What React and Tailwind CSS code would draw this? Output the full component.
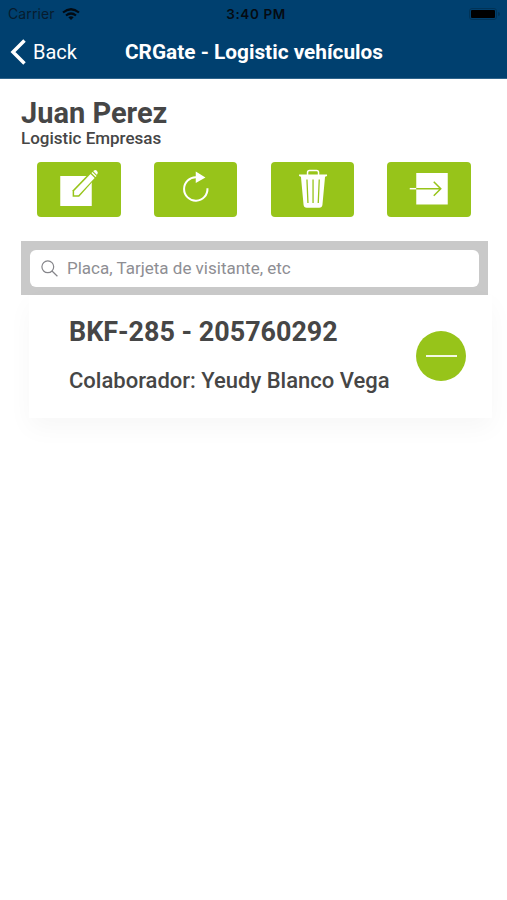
import React from 'react';

const EditIcon = () => (
  <svg className="w-full h-full" viewBox="0 0 83 55" fill="none">
    <path d="M23 14h31.500v30H23z" fill="#fff" />
    <path d="M35.400 34.700v-6.400L52.600 10.500l6 5.600L41.900 34.700z" fill="#97c41a" />
    <path d="M36.900 33.200v-4.300L53.300 12l4.100 3.900L41.200 33.200z" fill="#fff" />
    <path d="M54.200 11l1-1 4.100 3.900-1 1z" fill="#fff" />
    <path d="M56 9.200l.7-.7q1.400-1 2.900.3t.6 3.200l-.7.700z" fill="#fff" />
  </svg>
);

const RefreshIcon = () => (
  <svg className="w-full h-full" viewBox="0 0 83 55" fill="none">
    <path d="M42 15.300A11.700 11.700 0 1 0 53.200 26.200" stroke="#fff" strokeWidth="2" />
    <path d="M41.500 9.500l9.700 5.900-9.700 5.700z" fill="#fff" />
  </svg>
);

const TrashIcon = () => (
  <svg className="w-full h-full" viewBox="0 0 83 55" fill="none">
    <path d="M36.300 13v-2.500q0-2 2-2h7q2 0 2 2V13" stroke="#fff" strokeWidth="1.500" />
    <path d="M27.800 12.500h28V14l-2 .7-2.600 28q-.3 3-3.200 3H35.500q-2.900 0-3.200-3l-2.600-28-1.900-.7z" fill="#fff" />
    <path d="M35.700 17.500l1 23.500M41.800 17.500V41M48 17.500l-1 23.500" stroke="#97c41a" strokeWidth="1.300" />
  </svg>
);

const ExitIcon = () => (
  <svg className="w-full h-full" viewBox="0 0 83 55" fill="none">
    <path d="M29 11h31.500v31.500H29z" fill="#fff" />
    <path d="M22.500 26.700H29" stroke="#fff" strokeWidth="1.500" />
    <path d="M29 26.700h24M46.500 19.700l7 7-7 7" stroke="#97c41a" strokeWidth="1.500" />
  </svg>
);

const actions = [
  { label: 'Edit', Icon: EditIcon },
  { label: 'Refresh', Icon: RefreshIcon },
  { label: 'Delete', Icon: TrashIcon },
  { label: 'Exit', Icon: ExitIcon },
];

const Header = () => (
  <header className="h-[79px] bg-[#00406f] border-b border-[#2f648b]">
    <div className="grid grid-cols-3 items-center h-[27px] pl-2 pr-[7px] font-['Inter',sans-serif]">
      <div className="flex items-center gap-[7px]">
        <span className="text-[14px] leading-none tracking-[0.1px] text-[#071c2e]">Carrier</span>
        <svg className="w-[18px] h-3" viewBox="0 0 18 12" fill="none" stroke="#020a12" strokeWidth="2.200">
          <path d="M1 4.500q8-6.500 16 0M4 7.500q5-4 10 0" />
          <path d="M9 12L6.300 9.300q2.700-2.100 5.400 0z" fill="#020a12" stroke="none" />
        </svg>
      </div>
      <span className="text-center pl-1 pt-px text-[13.500px] tracking-[0.6px] font-semibold text-[#050b12] whitespace-nowrap">3:40 PM</span>
      <div className="flex justify-end items-center">
        <div className="w-[28px] h-3 rounded-[3px] border border-[#003357] p-px">
          <div className="h-full rounded-[1px] bg-black" />
        </div>
        <div className="w-0.5 h-1 ml-px rounded-r bg-[#003357]" />
      </div>
    </div>
    <div className="flex items-center h-[49px] pl-2.5 text-white">
      <button className="flex items-center w-[115px] text-xl">
        <svg className="w-4 h-[26px] mr-[7px]" viewBox="0 0 16 26" fill="none" stroke="#fff" strokeWidth="3.500">
          <path d="M14.500 1.500L3 13l11.500 11.500" />
        </svg>
        Back
      </button>
      <h1 className="text-[20.800px] leading-[30px] font-bold whitespace-nowrap">CRGate - Logistic vehículos</h1>
    </div>
  </header>
);

const VehicleCard = ({ title, subtitle }) => (
  <div className="ml-2 -mr-1.5 h-[123px] flex items-start bg-white shadow-[0_10px_24px_rgba(0,0,0,0.035)]">
    <div className="pl-10 w-[387px]">
      <p className="mt-[19px] text-[26.900px] leading-9 font-bold whitespace-nowrap">{title}</p>
      <p className="mt-4 text-[22px] leading-[30px] font-medium whitespace-nowrap">{subtitle}</p>
    </div>
    <button className="mt-[35.500px] w-[50px] h-[50px] rounded-full bg-[#97c41a] flex items-center justify-center">
      <span className="w-[31px] h-0.5 bg-[#f4f9e3]" />
    </button>
  </div>
);

const App = () => {
  return (
    <div className="h-[900px] w-[507px] overflow-hidden bg-white font-['Roboto',sans-serif] text-[#464646]">
      <Header />
      <main className="px-[21px] pt-4">
        <h2 className="text-[29px] leading-9 font-bold">Juan Perez</h2>
        <p className="-mt-px text-[17px] leading-4 font-medium">Logistic Empresas</p>
        <div className="flex justify-between mt-4 pl-4 pr-[15px]">
          {actions.map(({ label, Icon }) => (
            <button key={label} aria-label={label} className="w-[83.500px] h-[55px] rounded bg-[#97c41a]">
              <Icon />
            </button>
          ))}
        </div>
        <div className="mt-6 h-[54px] w-[466.500px] bg-[#c9c9c9] px-[9px] pt-[9px]">
          <div className="h-[37px] rounded-md bg-white flex items-center pl-[11px] text-[17px] text-[#8e8e93]">
            <svg className="w-[17px] h-[17px] mr-[9px]" viewBox="0 0 17 17" fill="none" stroke="#85858a" strokeWidth="1.200">
              <circle cx="6.800" cy="6.800" r="5.900" />
              <path d="M11 11l5.400 5.200" />
            </svg>
            Placa, Tarjeta de visitante, etc
          </div>
        </div>
        <VehicleCard title="BKF-285 - 205760292" subtitle="Colaborador: Yeudy Blanco Vega" />
      </main>
    </div>
  );
};

export default App;
